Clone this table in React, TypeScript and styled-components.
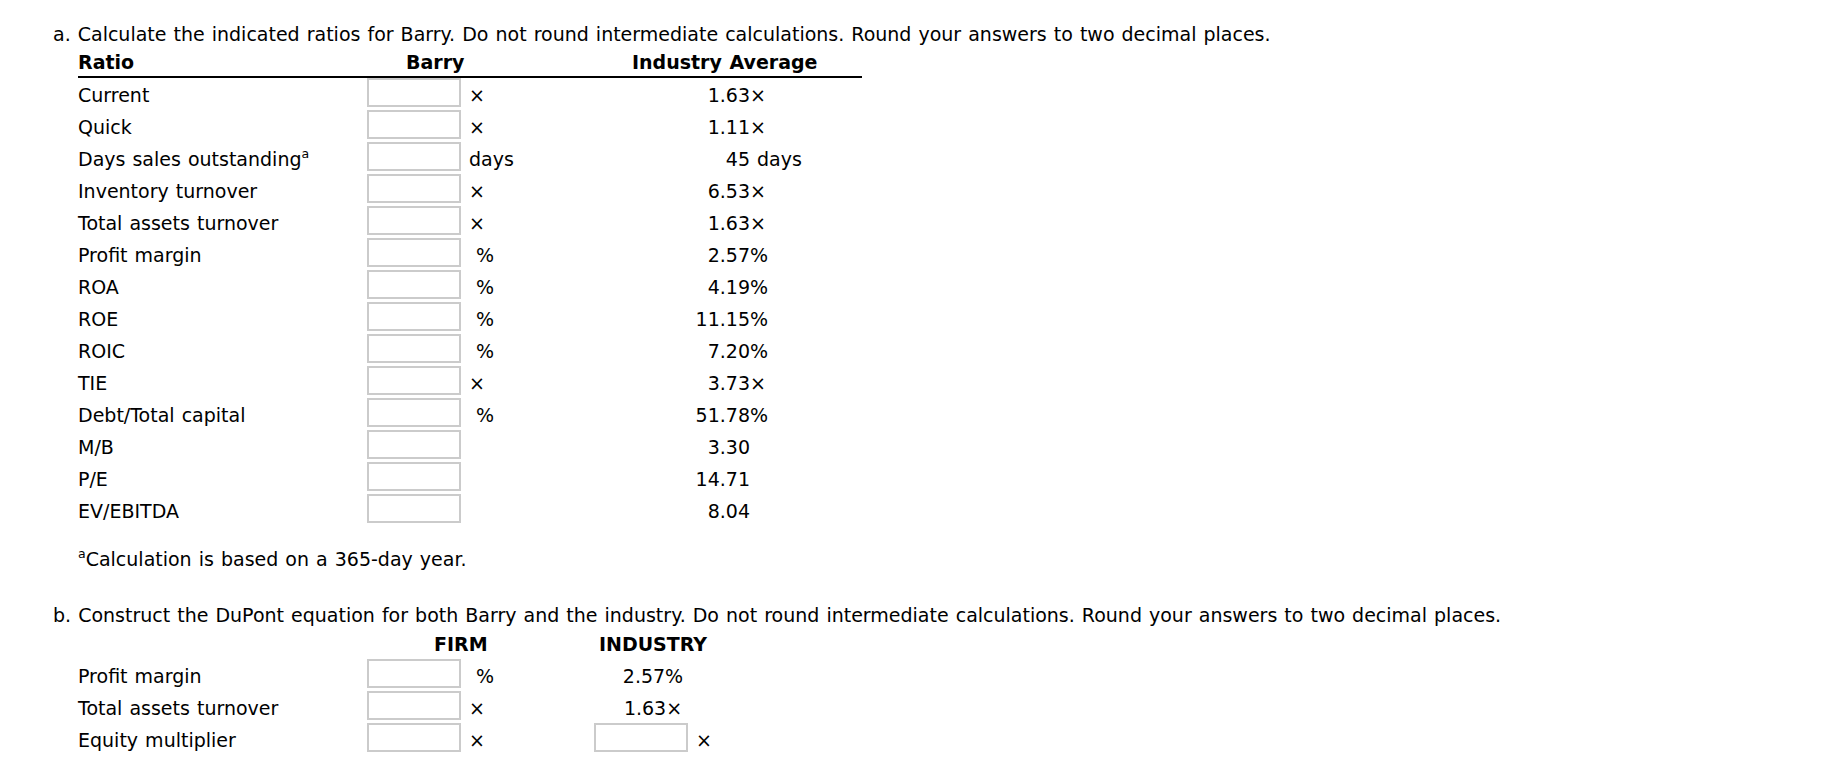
import styled, { createGlobalStyle } from 'styled-components';

const GlobalStyle = createGlobalStyle`
  body {
    margin: 0;
    background: #fff;
    color: #000;
    font-family: Verdana, "DejaVu Sans", sans-serif;
    font-size: 19px;
    word-spacing: 1px;
  }
`

type RatioRow = {
  label: string
  sup?: boolean
  unit: string
  value: string
  valueUnit: string
}

const ratios: RatioRow[] = [
  { label: "Current", unit: "×", value: "1.63", valueUnit: "×" },
  { label: "Quick", unit: "×", value: "1.11", valueUnit: "×" },
  { label: "Days sales outstanding", sup: true, unit: "days", value: "45", valueUnit: " days" },
  { label: "Inventory turnover", unit: "×", value: "6.53", valueUnit: "×" },
  { label: "Total assets turnover", unit: "×", value: "1.63", valueUnit: "×" },
  { label: "Profit margin", unit: " %", value: "2.57", valueUnit: "%" },
  { label: "ROA", unit: " %", value: "4.19", valueUnit: "%" },
  { label: "ROE", unit: " %", value: "11.15", valueUnit: "%" },
  { label: "ROIC", unit: " %", value: "7.20", valueUnit: "%" },
  { label: "TIE", unit: "×", value: "3.73", valueUnit: "×" },
  { label: "Debt/Total capital", unit: " %", value: "51.78", valueUnit: "%" },
  { label: "M/B", unit: "", value: "3.30", valueUnit: "" },
  { label: "P/E", unit: "", value: "14.71", valueUnit: "" },
  { label: "EV/EBITDA", unit: "", value: "8.04", valueUnit: "" },
]

type DupontRow = {
  label: string
  unit: string
  industry?: string
}

const dupont: DupontRow[] = [
  { label: "Profit margin", unit: " %", industry: "2.57%" },
  { label: "Total assets turnover", unit: "×", industry: "1.63×" },
  { label: "Equity multiplier", unit: "×" },
]

const App = () => {
  return (
    <Page>
      <GlobalStyle />
      <Prompt>a. Calculate the indicated ratios for Barry. Do not round intermediate calculations. Round your answers to two decimal places.</Prompt>

      <Table>
        <HeadRow>
          <HeadCell>Ratio</HeadCell>
          <HeadCell span={2} pad={39}>Barry</HeadCell>
          <HeadCell span={2} pad={32}>Industry Average</HeadCell>
        </HeadRow>
        {ratios.map(r => (
          <BodyRow key={r.label}>
            <Label>
              {r.label}
              {r.sup && <Sup>a</Sup>}
            </Label>
            <AnswerBox />
            <Unit>{r.unit}</Unit>
            <Figure>{r.value}</Figure>
            <FigureUnit>{r.valueUnit}</FigureUnit>
          </BodyRow>
        ))}
      </Table>

      <Footnote><Sup>a</Sup>Calculation is based on a 365-day year.</Footnote>

      <Prompt top={30}>b. Construct the DuPont equation for both Barry and the industry. Do not round intermediate calculations. Round your answers to two decimal places.</Prompt>

      <Table>
        <DupontHead>
          <span />
          <HeadCell span={2} pad={67}>FIRM</HeadCell>
          <IndustryHead>INDUSTRY</IndustryHead>
        </DupontHead>
        {dupont.map(d => (
          <DupontBody key={d.label}>
            <Label>{d.label}</Label>
            <AnswerBox />
            <Unit>{d.unit}</Unit>
            <IndustryCell>
              {d.industry ? <IndustryValue>{d.industry}</IndustryValue> : (
                <>
                  <AnswerBox />
                  <Unit>×</Unit>
                </>
              )}
            </IndustryCell>
          </DupontBody>
        ))}
      </Table>
    </Page>
  )
}

export default App

const Page = styled.div`
  padding: 21px 0 0 53px;
`

const Prompt = styled.p<{ top?: number }>`
  margin: ${p => p.top ?? 0}px 0 0 0;
  line-height: 26px;
  white-space: nowrap;
`

const Table = styled.div`
  margin-left: 25px;
`

const ratioCols = `289px 94px 139px 150px 112px`

const HeadRow = styled.div`
  display: grid;
  grid-template-columns: ${ratioCols};
  width: 784px;
  height: 29px;
  align-items: center;
  border-bottom: 2px solid #000;
`

const HeadCell = styled.div<{ span?: number; pad?: number }>`
  grid-column: span ${p => p.span ?? 1};
  padding-left: ${p => p.pad ?? 0}px;
  font-weight: bold;
  line-height: 30px;
  white-space: nowrap;
`

const BodyRow = styled.div`
  display: grid;
  grid-template-columns: ${ratioCols};
  height: 32px;
  align-items: start;
`

const Label = styled.div`
  padding-top: 2px;
  line-height: 30px;
  white-space: nowrap;
`

const Sup = styled.sup`
  font-size: 12.5px;
  line-height: 0;
  vertical-align: 8px;
`

const AnswerBox = styled.div`
  box-sizing: border-box;
  width: 94px;
  height: 29px;
  border: 2px solid #cbcbcb;
  background: #fff;
`

const Unit = styled.div`
  padding: 2px 0 0 8px;
  line-height: 30px;
  white-space: pre;
`

const Figure = styled.div`
  padding-top: 2px;
  text-align: right;
  line-height: 30px;
`

const FigureUnit = styled.div`
  padding-top: 2px;
  line-height: 30px;
  white-space: pre;
`

const Footnote = styled.p`
  margin: 20px 0 0 25px;
  line-height: 26px;
`

const dupontCols = `289px 94px 131px 122px`

const DupontHead = styled.div`
  display: grid;
  grid-template-columns: ${dupontCols};
  height: 31px;
  align-items: center;
`

const IndustryHead = styled.div`
  font-weight: bold;
  text-align: center;
  line-height: 30px;
`

const DupontBody = styled.div`
  display: grid;
  grid-template-columns: ${dupontCols};
  height: 32px;
  align-items: start;
`

const IndustryCell = styled.div`
  display: flex;
  justify-content: center;
  align-items: flex-start;
`

const IndustryValue = styled.div`
  padding-top: 2px;
  line-height: 30px;
`
